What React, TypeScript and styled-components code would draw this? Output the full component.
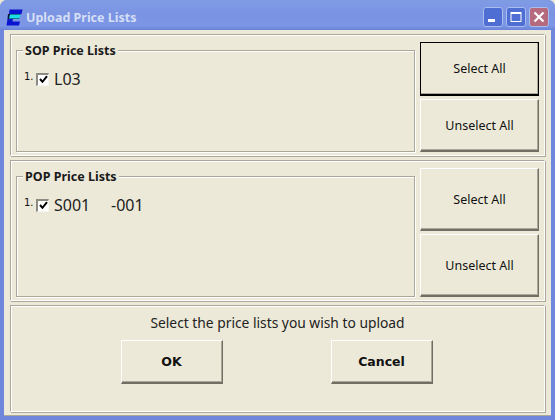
import React from 'react';
import styled, { createGlobalStyle } from 'styled-components';

const GlobalStyle = createGlobalStyle`
  html, body { margin: 0; padding: 0; background: #ece9d8; }
  body { font-family: "Noto Sans", "DejaVu Sans", sans-serif; }
`;

const Win = styled.div`
  width: 555px;
  height: 420px;
  box-sizing: border-box;
  display: flex;
  flex-direction: column;
  background: #6f86dc;
  border-radius: 7px 7px 0 0;
  overflow: hidden;
`;

const TitleBar = styled.div`
  height: 30px;
  flex: none;
  box-sizing: border-box;
  display: flex;
  align-items: center;
  padding: 4px 3px 0 6px;
  background: linear-gradient(180deg, #7f9be0 0%, #7e9ae6 12%, #7a93e2 50%, #7c97e6 85%, #6a83d8 100%);
`;

const AppIcon = styled.svg`
  width: 17px;
  height: 17px;
  flex: none;
  margin-right: 3px;
`;

const Title = styled.span`
  flex: 1;
  font-size: 12.5px;
  font-weight: 700;
  color: #d5dff5;
  white-space: nowrap;
`;

const CapBtn = styled.div<{ $close?: boolean }>`
  width: 20px;
  height: 20px;
  margin-right: 3px;
  box-sizing: border-box;
  border: 1px solid #a9bcec;
  border-radius: 3px;
  background: ${(p) => (p.$close ? '#b56a7e' : '#4f6ed4')};
  display: flex;
  align-items: center;
  justify-content: center;
`;

const Client = styled.div`
  flex: 1;
  margin: 0 4px 4px;
  background: #ece9d8;
  display: flex;
  flex-direction: column;
  padding: 4px 6px 3px;
  border-bottom: 1px solid #aca899;
`;

const Section = styled.div<{ $h: number }>`
  height: ${(p) => p.$h}px;
  box-sizing: border-box;
  flex: none;
  border: 1px solid #aca899;
  border-right-color: #fff;
  border-bottom-color: #fff;
  box-shadow: inset 1px 1px 0 #fff, 1px 1px 0 #aca899;
  margin-bottom: 4px;
  display: flex;
  padding: 7px 5px 3px 5px;
  gap: 5px;
`;

const Group = styled.div`
  flex: 1;
  position: relative;
  margin-top: 8px;
  box-sizing: border-box;
  border: 1px solid #aca899;
  box-shadow: inset 1px 1px 0 #fff, 1px 1px 0 #fff;
  padding: 16px 6px 0 7px;
`;

const Legend = styled.span`
  position: absolute;
  left: 6px;
  top: -9px;
  padding: 0 2px;
  background: #ece9d8;
  font-size: 12.5px;
  font-weight: 700;
  line-height: 18px;
  color: #1a1a1a;
`;

const Row = styled.div`
  display: flex;
  align-items: center;
  height: 24px;
`;

const Num = styled.span`
  font-family: "DejaVu Sans", sans-serif;
  font-size: 10px;
  width: 12px;
  margin-bottom: 5px;
  color: #111;
`;

const Check = styled.span`
  width: 13px;
  height: 13px;
  box-sizing: border-box;
  background: #fff;
  border: 1px solid #f6f5ee;
  border-top: 2px solid #8b8b84;
  border-left: 2px solid #8b8b84;
  display: flex;
  align-items: center;
  justify-content: center;
  margin-right: 5px;
  flex: none;
`;

const Item = styled.span`
  font-size: 16px;
  color: #222;
  white-space: pre;
`;

const BtnCol = styled.div`
  width: 119px;
  flex: none;
  display: flex;
  flex-direction: column;
  gap: 3px;
`;

const Btn = styled.div<{ $focus?: boolean }>`
  flex: 1;
  box-sizing: border-box;
  display: flex;
  align-items: center;
  justify-content: center;
  padding-top: 1px;
  font-size: 12.5px;
  color: #111;
  background: #ece9d8;
  border-top: 1px solid ${(p) => (p.$focus ? '#000' : '#fff')};
  border-left: 1px solid ${(p) => (p.$focus ? '#000' : '#fff')};
  border-right: 1px solid ${(p) => (p.$focus ? '#000' : '#716f64')};
  border-bottom: 2px solid ${(p) => (p.$focus ? '#000' : '#716f64')};
  box-shadow: inset -1px -1px 0 #aca899;
`;

const Footer = styled.div`
  flex: 1;
  box-sizing: border-box;
  border: 1px solid #aca899;
  border-right-color: #fff;
  border-bottom-color: #fff;
  box-shadow: inset 1px 1px 0 #fff, 1px 1px 0 #aca899;
  display: flex;
  flex-direction: column;
  align-items: center;
  padding-top: 8px;
`;

const Hint = styled.div`
  font-size: 13.8px;
  line-height: 17px;
  color: #222;
  margin-bottom: 9px;
`;

const FootBtns = styled.div`
  display: flex;
  gap: 108px;
  margin-right: 2px;
`;

const BigBtn = styled(Btn)`
  flex: none;
  width: 102px;
  height: 44px;
  font-family: "DejaVu Sans", sans-serif;
  font-size: 12.5px;
  font-weight: 700;
  padding-top: 0;
`;

const Tick = () => (
  <svg width="9" height="9" viewBox="0 0 9 9">
    <path d="M1 4 L3.5 6.8 L8 1.2" fill="none" stroke="#000" strokeWidth="2" />
  </svg>
);

const PriceGroup: React.FC<{ title: string; item: string; focus?: boolean; h: number }> = ({ title, item, focus, h }) => (
  <Section $h={h}>
    <Group>
      <Legend>{title}</Legend>
      <Row>
        <Num>1.</Num>
        <Check><Tick /></Check>
        <Item>{item}</Item>
      </Row>
    </Group>
    <BtnCol>
      <Btn $focus={focus}>Select All</Btn>
      <Btn>Unselect All</Btn>
    </BtnCol>
  </Section>
);

export default function App() {
  return (
    <>
      <GlobalStyle />
      <Win>
        <TitleBar>
          <AppIcon viewBox="0 0 17 17">
            <path d="M3.5 0.5 H16.5 L15.5 5 H3 Z" fill="#0a14d0" />
            <path d="M2 5 H14.5 L13 10 H1.5 Z" fill="#10143a" />
            <path d="M4 5.6 H14.5 L13.4 9.4 H3 Z" fill="#19e0e8" />
            <path d="M1.5 10 H7 L6.5 12.5 H14 L13 16.5 H0.5 Z" fill="#0a14d0" />
          </AppIcon>
          <Title>Upload Price Lists</Title>
          <CapBtn>
            <svg width="14" height="14" viewBox="0 0 14 14"><rect x="2" y="9" width="7" height="3" fill="#fff" /></svg>
          </CapBtn>
          <CapBtn>
            <svg width="14" height="14" viewBox="0 0 14 14"><rect x="2" y="2.5" width="10" height="9" fill="none" stroke="#fff" strokeWidth="1" /><rect x="2" y="2" width="10" height="2" fill="#fff" /></svg>
          </CapBtn>
          <CapBtn $close>
            <svg width="14" height="14" viewBox="0 0 14 14"><path d="M2.5 2.5 L11.5 11.5 M11.5 2.5 L2.5 11.5" stroke="#fff" strokeWidth="2.2" /></svg>
          </CapBtn>
        </TitleBar>
        <Client>
          <PriceGroup title="SOP Price Lists" item="L03" focus h={122} />
          <PriceGroup title="POP Price Lists" item="S001     -001" h={141} />
          <Footer>
            <Hint>Select the price lists you wish to upload</Hint>
            <FootBtns>
              <BigBtn>OK</BigBtn>
              <BigBtn>Cancel</BigBtn>
            </FootBtns>
          </Footer>
        </Client>
      </Win>
    </>
  );
}
